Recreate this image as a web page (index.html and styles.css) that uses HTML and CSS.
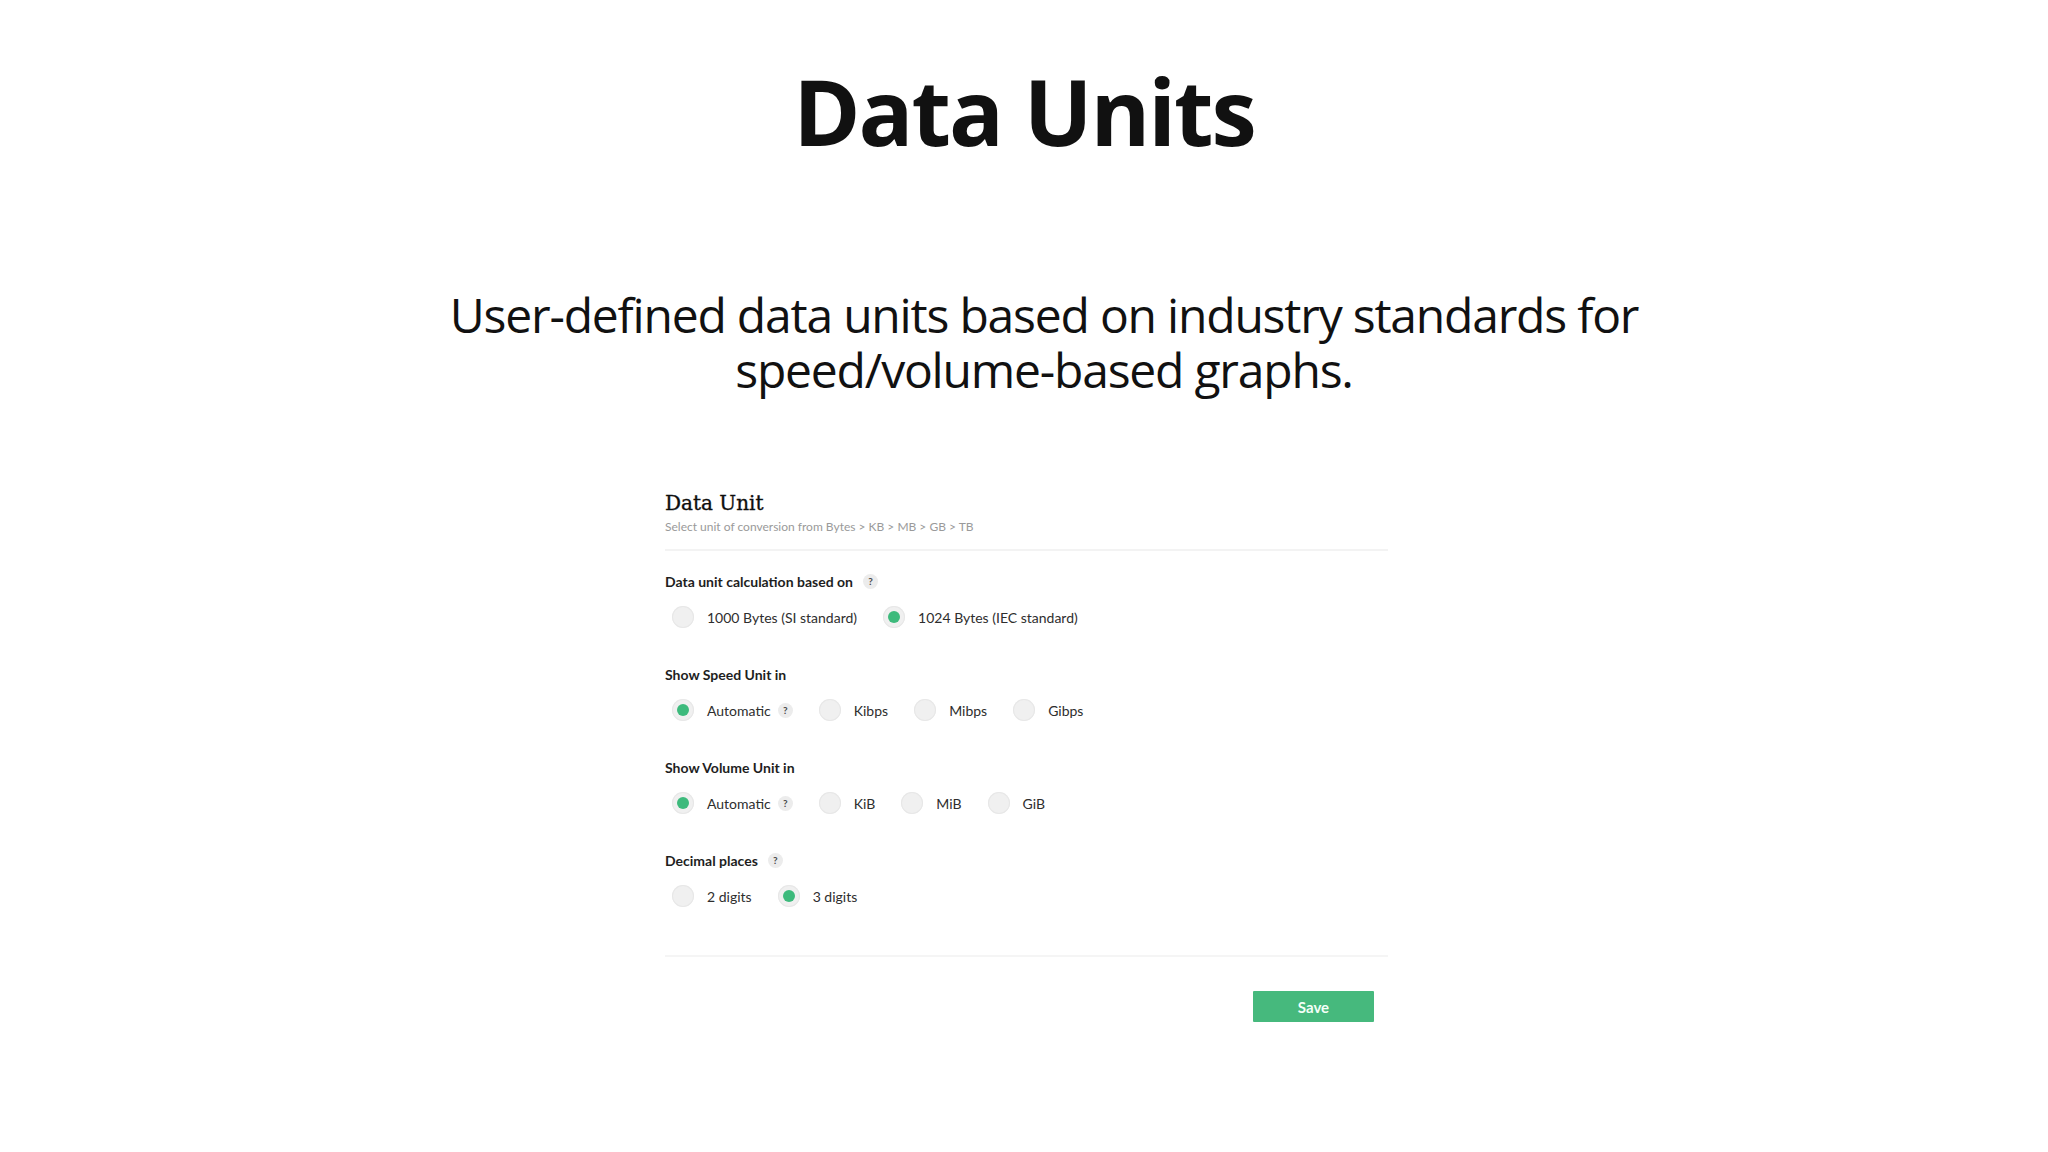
FILE: index.html
```html
<!DOCTYPE html>
<html lang="en">
<head>
<meta charset="utf-8">
<title>Data Units</title>
<link rel="stylesheet" href="styles.css">
</head>
<body>
<header class="hero">
  <h1 class="title">Data Units</h1>
  <p class="lead"><span class="lead-line">User-defined data units based on industry standards for</span><span class="lead-line">speed/volume-based graphs.</span></p>
</header>

<section class="panel">
  <div class="panel-head">
    <h2 class="panel-title">Data Unit</h2>
    <p class="panel-sub">Select unit of conversion from Bytes &gt; KB &gt; MB &gt; GB &gt; TB</p>
  </div>

  <div class="groups">
    <div class="group">
      <div class="group-label">Data unit calculation based on <span class="help">?</span></div>
      <div class="options">
        <label class="opt"><span class="radio"></span><span class="txt">1000 Bytes (SI standard)</span></label>
        <label class="opt"><span class="radio on"></span><span class="txt">1024 Bytes (IEC standard)</span></label>
      </div>
    </div>

    <div class="group">
      <div class="group-label">Show Speed Unit in</div>
      <div class="options">
        <label class="opt"><span class="radio on"></span><span class="txt">Automatic <span class="help">?</span></span></label>
        <label class="opt"><span class="radio"></span><span class="txt">Kibps</span></label>
        <label class="opt"><span class="radio"></span><span class="txt">Mibps</span></label>
        <label class="opt"><span class="radio"></span><span class="txt">Gibps</span></label>
      </div>
    </div>

    <div class="group">
      <div class="group-label">Show Volume Unit in</div>
      <div class="options">
        <label class="opt"><span class="radio on"></span><span class="txt">Automatic <span class="help">?</span></span></label>
        <label class="opt"><span class="radio"></span><span class="txt">KiB</span></label>
        <label class="opt"><span class="radio"></span><span class="txt">MiB</span></label>
        <label class="opt"><span class="radio"></span><span class="txt">GiB</span></label>
      </div>
    </div>

    <div class="group">
      <div class="group-label">Decimal places <span class="help">?</span></div>
      <div class="options">
        <label class="opt"><span class="radio"></span><span class="txt">2 digits</span></label>
        <label class="opt"><span class="radio on"></span><span class="txt">3 digits</span></label>
      </div>
    </div>
  </div>

  <div class="panel-foot">
    <button class="save" type="button">Save</button>
  </div>
</section>
</body>
</html>
```

FILE: styles.css
```css
html, body {
  margin: 0;
  padding: 0;
  background: #ffffff;
}

.hero {
  text-align: center;
  padding-top: 66px;
}

.title {
  margin: 0;
  font-family: "Open Sans", sans-serif;
  font-weight: 700;
  font-size: 91px;
  line-height: 90px;
  letter-spacing: -2px;
  color: #111111;
}

.lead {
  margin: 131px 0 0 0;
  padding-left: 40px;
  font-family: "Open Sans", sans-serif;
  font-weight: 400;
  font-size: 48px;
  line-height: 55px;
  letter-spacing: -1.2px;
  color: #111111;
  display: flex;
  flex-direction: column;
  align-items: center;
}

.lead-line {
  display: block;
  height: 55px;
}

.panel {
  margin: 94px 0 0 665px;
  width: 723px;
  font-family: Lato, "Open Sans", sans-serif;
}

.panel-head {
  padding-bottom: 14px;
  border-bottom: 2px solid #f3f3f3;
}

.panel-title {
  margin: 0;
  font-family: "DejaVu Serif", "Liberation Serif", serif;
  font-weight: 400;
  font-size: 20px;
  line-height: 24px;
  color: #0e0e0e;
  -webkit-text-stroke: 0.35px #0e0e0e;
}

.panel-sub {
  margin: 4px 0 0 0;
  font-size: 12px;
  line-height: 16px;
  color: #9a9a9a;
}

.groups {
  padding-top: 20px;
  display: flex;
  flex-direction: column;
  gap: 36px;
}

.group-label {
  display: flex;
  align-items: center;
  gap: 10px;
  height: 20px;
  font-size: 14px;
  font-weight: 700;
  color: #1e1e1e;
}

.options {
  display: flex;
  align-items: center;
  gap: 26px;
  height: 22px;
  margin-top: 15px;
  padding-left: 7px;
}

.opt {
  display: flex;
  align-items: center;
  gap: 13px;
  font-size: 14px;
  color: #2e2e2e;
}

.txt {
  display: inline-flex;
  align-items: center;
  gap: 7px;
}

.radio {
  width: 22px;
  height: 22px;
  border-radius: 50%;
  background: #f0f0f0;
  box-shadow: inset 0 0 0 1px #e7e7e7;
  display: flex;
  align-items: center;
  justify-content: center;
}

.radio.on::after {
  content: "";
  width: 12px;
  height: 12px;
  border-radius: 50%;
  background: #3dba7c;
}

.help {
  width: 15px;
  height: 15px;
  border-radius: 50%;
  background: #ececec;
  color: #4a4a4a;
  font-size: 10px;
  font-weight: 700;
  display: inline-flex;
  align-items: center;
  justify-content: center;
  line-height: 1;
}

.panel-foot {
  margin-top: 48px;
  border-top: 2px solid #f5f5f5;
  padding-top: 34px;
  padding-right: 14px;
  display: flex;
  justify-content: flex-end;
}

.save {
  width: 121px;
  height: 31px;
  border: 0;
  border-radius: 1px;
  background: #46b97d;
  color: #f4fff8;
  font-family: Lato, sans-serif;
  font-size: 15px;
  font-weight: 700;
  cursor: pointer;
}
```
